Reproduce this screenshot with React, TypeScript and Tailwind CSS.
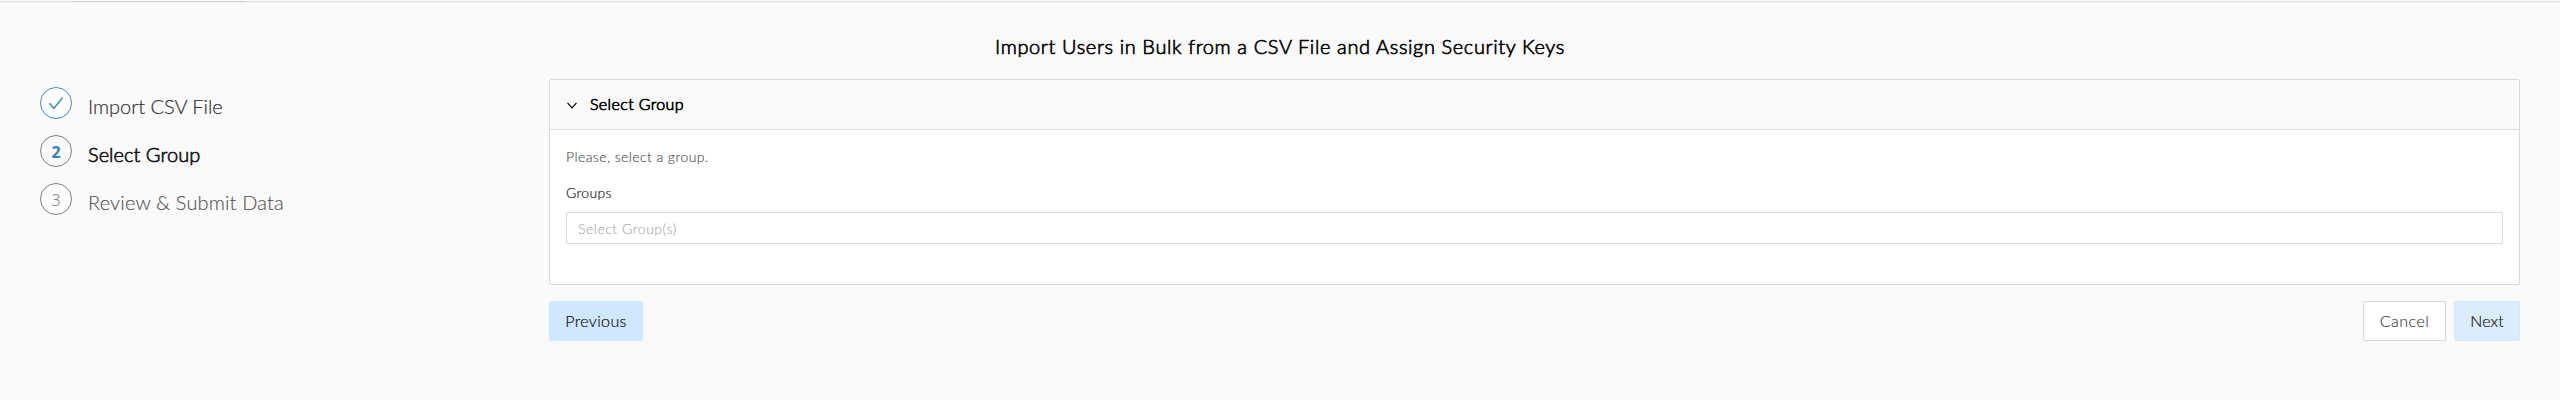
const steps = [
  { label: 'Import CSV File', style: 'text-[#333] tracking-[-0.02px] [-webkit-text-stroke:0.2px_currentColor]', circle: 'border-[#3f8bd0] bg-white text-[#3f8bd0]', mark: '' },
  { label: 'Select Group', style: 'text-[#111] tracking-[0.04px] [-webkit-text-stroke:0.65px_currentColor]', circle: 'border-[#808080] bg-[#fafafa] text-[#3182ce] font-bold', mark: '2' },
  { label: 'Review & Submit Data', style: 'text-[#555] tracking-[0.16px] [-webkit-text-stroke:0.15px_currentColor]', circle: 'border-[#808080] bg-white text-[#808080] font-light', mark: '3' },
];

export default function App() {
  return (
    <div className="flex h-[400px] flex-col bg-[#fafafa] font-['Lato',sans-serif] font-light">
      <div className="mt-px flex h-[2px] flex-col bg-[#eeeeee]">
        <div className="flex h-px bg-[#e0e0e0] pl-[73px]">
          <div className="h-px w-[170px] bg-[#d2d2d2]" />
        </div>
      </div>
      <h1 className="mt-[31px] text-center text-[20px] leading-6 tracking-[0.62px] text-black [-webkit-text-stroke:0.65px_currentColor]">
        Import Users in Bulk from a CSV File and Assign Security Keys
      </h1>
      <div className="mt-[21px] flex pr-10">
        <ol className="flex w-[549px] flex-col gap-4 pt-2 pl-10">
          {steps.map((s) => (
            <li key={s.label} className="flex h-8 items-center gap-4">
              <span className={`flex size-8 items-center justify-center rounded-full border pt-0.5 font-['Noto_Sans'] text-[16px] leading-none ${s.circle}`}>
                {s.mark || (
                  <svg width="16" height="14" viewBox="0 0 16 14" className="-mt-0.5" fill="none" stroke="currentColor" strokeWidth="1.5">
                    <path d="M1.3 7.2 L6 12.3 L14.7 1.5" />
                  </svg>
                )}
              </span>
              <span className={`pt-[6px] text-[20px] leading-6 ${s.style}`}>{s.label}</span>
            </li>
          ))}
        </ol>
        <main className="flex-1">
          <section className="h-[206px] rounded-[2px] border border-[#d9d9d9] bg-white">
            <header className="flex h-[50px] items-center border-b border-[#d9d9d9] bg-[#fafafa] pl-[17px]">
              <svg width="10" height="7" viewBox="0 0 10 7" className="mt-0.5" fill="none" stroke="#000" strokeWidth="1.2">
                <path d="M0.5 0.8 L5 5.8 L9.5 0.8" />
              </svg>
              <h2 className="-mt-px ml-[13px] text-[16px] leading-5 tracking-[0.38px] text-black [-webkit-text-stroke:0.7px_currentColor]">Select Group</h2>
            </header>
            <div className="px-4 pt-[17px]">
              <p className="text-[14px] leading-5 tracking-[0.42px] text-[#444] [-webkit-text-stroke:0.1px_currentColor]">Please, select a group.</p>
              <p className="mt-4 text-[14px] leading-5 tracking-[0.3px] text-[#222] [-webkit-text-stroke:0.2px_currentColor]">Groups</p>
              <div className="mt-[9px] flex h-8 items-center rounded-[2px] border border-[#d9d9d9] px-[11px] text-[14px] tracking-[0.53px] text-[#aaa] [-webkit-text-stroke:0.15px_currentColor]">Select Group(s)</div>
            </div>
          </section>
          <div className="mt-4 flex gap-2 text-[16px]">
            <button className="mr-auto h-10 w-[94px] rounded-[2px] bg-[#cfe8ff] tracking-[0.35px] text-[#111] [-webkit-text-stroke:0.2px_currentColor]">Previous</button>
            <button className="h-10 w-[83px] rounded-[2px] border border-[#d9d9d9] bg-white tracking-[0.5px] text-[#333] [-webkit-text-stroke:0.1px_currentColor]">Cancel</button>
            <button className="h-10 w-[66px] rounded-[2px] border border-[#cfe8ff] bg-[#dbecfc] tracking-[0.15px] text-[#111] [-webkit-text-stroke:0.2px_currentColor]">Next</button>
          </div>
        </main>
      </div>
    </div>
  );
}
